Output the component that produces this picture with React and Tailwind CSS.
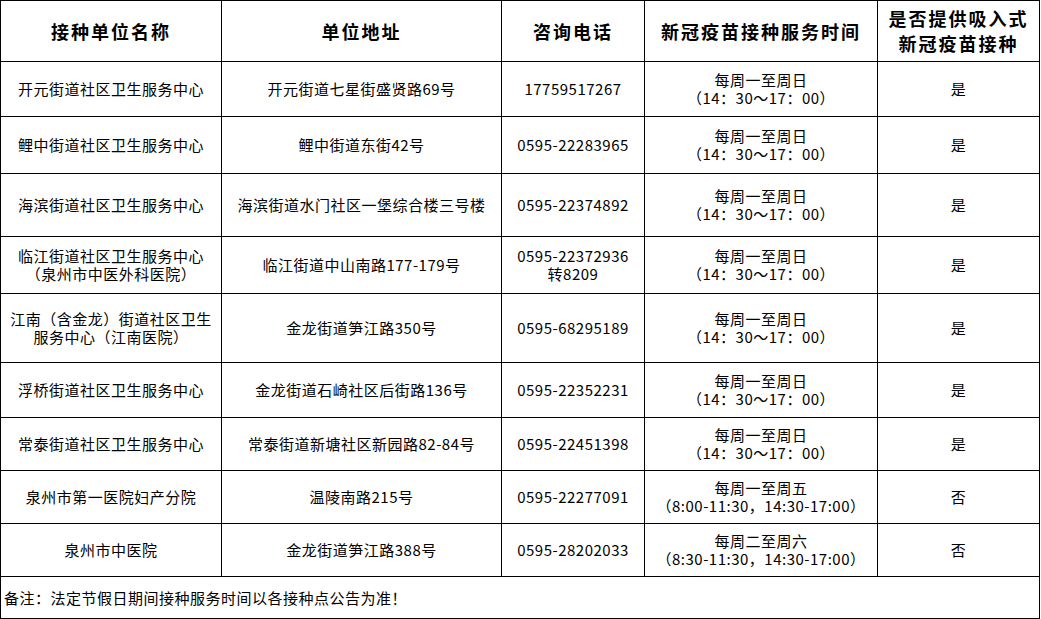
import React from 'react';

const rows = [
  { name: ['开元街道社区卫生服务中心'], addr: '开元街道七星街盛贤路69号', tel: ['17759517267'], day: '每周一至周日', time: '（14：30～17：00）', yes: '是', h: 'h-[55px]' },
  { name: ['鲤中街道社区卫生服务中心'], addr: '鲤中街道东街42号', tel: ['0595-22283965'], day: '每周一至周日', time: '（14：30～17：00）', yes: '是', h: 'h-[57px]' },
  { name: ['海滨街道社区卫生服务中心'], addr: '海滨街道水门社区一堡综合楼三号楼', tel: ['0595-22374892'], day: '每周一至周日', time: '（14：30～17：00）', yes: '是', h: 'h-[63px]' },
  { name: ['临江街道社区卫生服务中心', '（泉州市中医外科医院）'], addr: '临江街道中山南路177-179号', tel: ['0595-22372936', '转8209'], day: '每周一至周日', time: '（14：30～17：00）', yes: '是', h: 'h-[57px]' },
  { name: ['江南（含金龙）街道社区卫生', '服务中心（江南医院）'], addr: '金龙街道笋江路350号', tel: ['0595-68295189'], day: '每周一至周日', time: '（14：30～17：00）', yes: '是', h: 'h-[69px]' },
  { name: ['浮桥街道社区卫生服务中心'], addr: '金龙街道石崎社区后街路136号', tel: ['0595-22352231'], day: '每周一至周日', time: '（14：30～17：00）', yes: '是', h: 'h-[55px]' },
  { name: ['常泰街道社区卫生服务中心'], addr: '常泰街道新塘社区新园路82-84号', tel: ['0595-22451398'], day: '每周一至周日', time: '（14：30～17：00）', yes: '是', h: 'h-[53px]' },
  { name: ['泉州市第一医院妇产分院'], addr: '温陵南路215号', tel: ['0595-22277091'], day: '每周一至周五', time: '（8:00-11:30，14:30-17:00）', yes: '否', h: 'h-[53px]' },
  { name: ['泉州市中医院'], addr: '金龙街道笋江路388号', tel: ['0595-28202033'], day: '每周二至周六', time: '（8:30-11:30，14:30-17:00）', yes: '否', h: 'h-[53px]' },
];

const cell = 'border border-black text-center align-middle p-0';

export default function App() {
  return (
    <div className="w-[1041px] h-[619px] bg-white text-black font-['Noto_Sans_CJK_SC',sans-serif] text-[15px] tracking-[0.5px] leading-[18px] overflow-hidden">
      <table className="table-fixed border-collapse w-[1039px]">
        <colgroup>
          <col className="w-[221px]" />
          <col className="w-[280px]" />
          <col className="w-[143px]" />
          <col className="w-[233px]" />
          <col className="w-[162px]" />
        </colgroup>
        <thead>
          <tr className="h-[61px] text-[18px] font-bold tracking-[2px] leading-[25px]">
            <th className={cell}>接种单位名称</th>
            <th className={cell}>单位地址</th>
            <th className={cell}>咨询电话</th>
            <th className={cell}>新冠疫苗接种服务时间</th>
            <th className={cell}>
              <div>是否提供吸入式</div>
              <div>新冠疫苗接种</div>
            </th>
          </tr>
        </thead>
        <tbody>
          {rows.map((r, i) => (
            <tr key={i} className={r.h}>
              <td className={cell}>
                {r.name.map((n) => (
                  <div key={n}>{n}</div>
                ))}
              </td>
              <td className={cell}>{r.addr}</td>
              <td className={cell}>
                {r.tel.map((t) => (
                  <div key={t}>{t}</div>
                ))}
              </td>
              <td className={cell}>
                <div>{r.day}</div>
                <div>{r.time}</div>
              </td>
              <td className={cell}>{r.yes}</td>
            </tr>
          ))}
          <tr className="h-[42px]">
            <td colSpan={5} className="border border-black text-left align-middle pl-[3px]">
              备注：法定节假日期间接种服务时间以各接种点公告为准！
            </td>
          </tr>
        </tbody>
      </table>
    </div>
  );
}
